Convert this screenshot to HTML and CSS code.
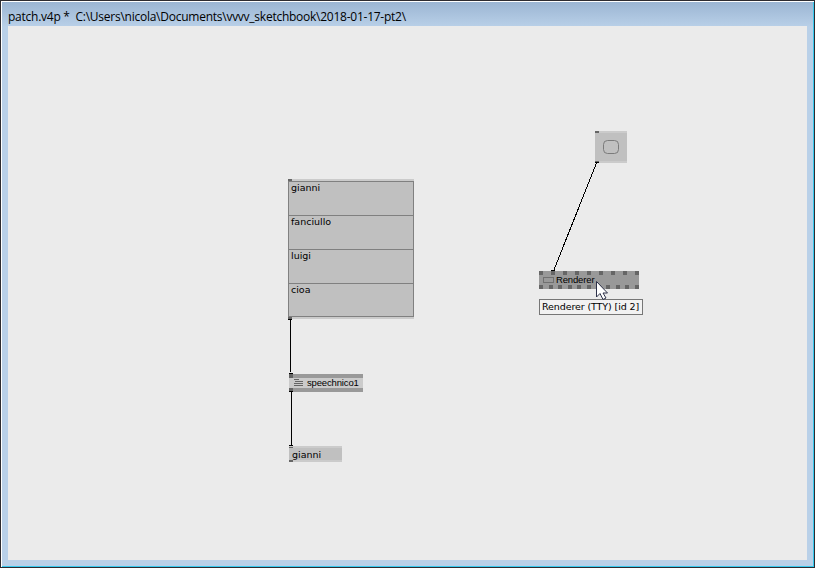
FILE: index.html
```html
<!DOCTYPE html>
<html lang="en">
<head>
<meta charset="utf-8">
<title>patch.v4p</title>
<link rel="stylesheet" href="styles.css">
</head>
<body>
<div class="window">
  <header class="titlebar"><span class="title">patch.v4p *&nbsp; C:\Users\nicola\Documents\vvvv_sketchbook\2018-01-17-pt2\</span></header>
  <main class="patch">
    <div class="node iobox list">
      <ul class="rows">
        <li><span>gianni</span></li>
        <li><span>fanciullo</span></li>
        <li><span>luigi</span></li>
        <li><span>cioa</span></li>
      </ul>
    </div>
    <div class="node speech">
      <svg class="lines" width="10" height="8" viewBox="0 0 10 8" shape-rendering="crispEdges"><path d="M0 .5h5M1 2.5h8M0 4.5h9M0 6.5h9" stroke="#666"/></svg>
      <span class="label">speechnico1</span>
    </div>
    <div class="node iobox value"><span>gianni</span></div>
    <div class="node iobox bang">
      <svg width="16" height="14" viewBox="0 0 16 14"><rect x=".5" y=".5" width="15" height="13" rx="4" fill="none" stroke="#7b7b7b"/></svg>
    </div>
    <div class="node renderer">
      <i class="frame"></i><span class="label">Renderer</span>
    </div>
    <div class="tooltip"><span>Renderer (TTY) [id 2]</span></div>
    <svg class="overlay" width="799" height="534" viewBox="8 26 799 534">
      <g shape-rendering="crispEdges">
        <path d="M288 179h4v2h-4zM288 317h4v2h-4zM289 374h4v4h-4zM289 388h4v4h-4zM289 447h4v1h-4zM289 460h4v2h-4zM595 131h4v2h-4zM595 161h4v2h-4z" fill="#666"/>
        <path d="M539 271h4v4h-4zM551 271h4v4h-4zM563 271h4v4h-4zM575 271h4v4h-4zM587 271h4v4h-4zM599 271h4v4h-4zM611 271h4v4h-4zM623 271h4v4h-4zM635 271h4v4h-4zM539 285h4v4h-4zM549 285h4v4h-4zM558 285h4v4h-4zM568 285h4v4h-4zM577 285h4v4h-4zM587 285h4v4h-4zM597 285h4v4h-4zM606 285h4v4h-4zM616 285h4v4h-4zM625 285h4v4h-4zM635 285h4v4h-4z" fill="#666"/>
        <path d="M288 319h4v1h-4zM290 319h1v53h-1zM289 373h4v1h-4zM289 391h4v1h-4zM291 392h1v54h-1zM289 445h4v1h-4zM595 162h4v1h-4zM551 270h4v1h-4z" fill="#000"/>
        <path d="M596.5 163L553.5 271" stroke="#000"/>
      </g>
      <path d="M596.500 281.500v15.500l3.500-3.500 3 6 3-1.500-3-5h4.500z" fill="#fff" stroke="#2c3048"/>
    </svg>
  </main>
</div>
</body>
</html>
```
FILE: styles.css
```css
* { box-sizing: border-box; }
body { margin: 0; }
.window {
  width: 815px;
  height: 568px;
  display: flex;
  flex-direction: column;
  padding: 0 6px 6px;
  border: 1px solid #2d2b30;
  background: linear-gradient(#9ab4d2, #b9d0e8 26px);
  box-shadow: inset 1px 1px #fff, inset -1px -1px #36c9ee;
  overflow: hidden;
}
.titlebar { height: 25px; padding: 7px 0 0 1px; white-space: pre; }
.title { display: block; font: 12px/17px "Open Sans", sans-serif; letter-spacing: -.25px; color: #000; }
.patch { position: relative; width: 799px; height: 534px; margin-left: 1px; background: #ebebeb; flex: none; }
.node { position: absolute; }
.iobox { background: #c0c0c0; border: solid #cbcbcb; border-width: 2px 0; font: 9.500px/13px "DejaVu Sans", sans-serif; }
.list { left: 280px; top: 153px; width: 126px; height: 140px; line-height: 11px; }
.rows { margin: 0; padding: 0; list-style: none; border: 1px solid #808080; height: 136px; display: grid; grid-template-rows: 34px 34px 34px 32px; }
.rows li { padding: 0 2px; }
.rows li + li { border-top: 1px solid #808080; margin-top: -1px; }
.speech { left: 281px; top: 348px; width: 74px; height: 18px; display: flex; align-items: center; gap: 3px; padding-left: 5px; background: #cbcbcb; border: solid #999; border-width: 4px 0; }
.label { font: 9.500px/10px "Liberation Sans", sans-serif; letter-spacing: -.15px; color: #000; }
.value { left: 281px; top: 420px; width: 53px; height: 16px; padding-left: 3px; }
.bang { left: 587px; top: 105px; width: 32px; height: 32px; display: grid; place-items: center; }
.renderer { left: 531px; top: 245px; width: 100px; height: 18px; display: flex; align-items: center; padding-left: 4px; gap: 2px; background: #999; }
.frame { width: 11px; height: 6px; border: 1px solid #707070; }
.tooltip { position: absolute; left: 531px; top: 273px; width: 104px; height: 16px; padding-left: 2px; border: 1px solid #767676; background: #f2f2f2; font: 9.500px/14px "DejaVu Sans", sans-serif; letter-spacing: -.1px; white-space: nowrap; }
.overlay { position: absolute; left: 0; top: 0; }
```
